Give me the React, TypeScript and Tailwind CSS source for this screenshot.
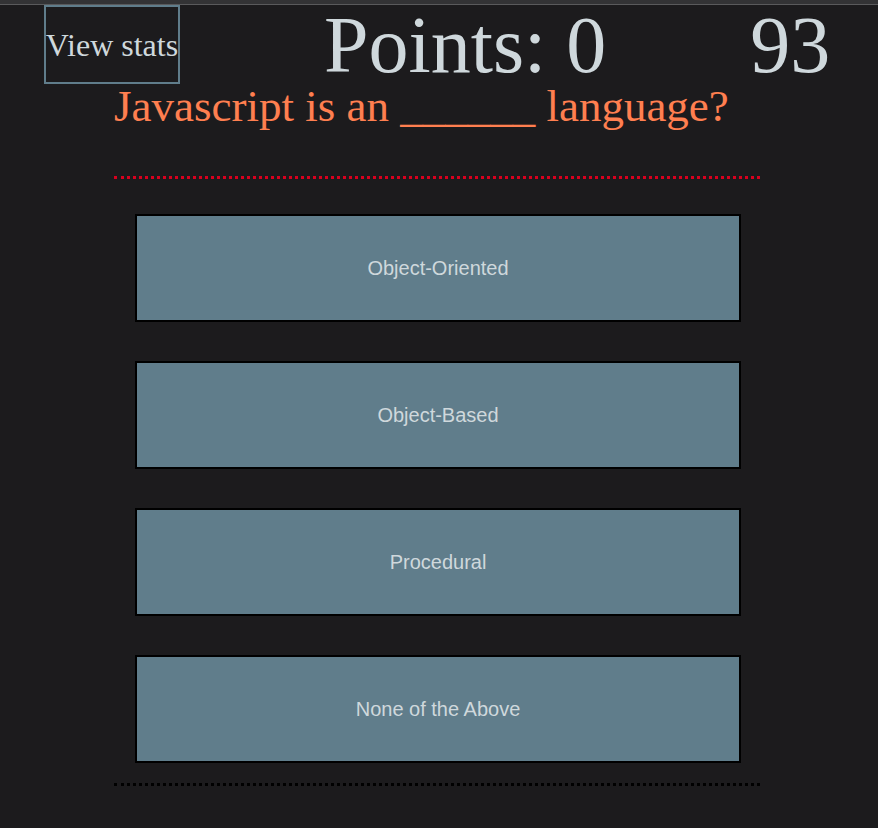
import React from 'react';

const answers = ["Object-Oriented", "Object-Based", "Procedural", "None of the Above"];

const serif = "font-['Liberation_Serif','Times_New_Roman',serif]";

const App: React.FC = () => {
  return (
    <div className="min-h-[828px] w-full bg-[#1c1b1d]">
      <div className="h-[5px] bg-[#333335] border-b border-[#5a5a5c]" />
      <div className={`flex h-[79px] items-start ${serif} text-[#cfd8dc]`}>
        <button className={`ml-[44px] flex h-[79px] w-[136px] items-center justify-center border-2 border-[#607d8b] p-0 text-[32px] leading-normal whitespace-nowrap ${serif} text-[#cfd8dc]`}>
          View stats
        </button>
        <div className="ml-[144px] text-[80px] leading-[80px] whitespace-nowrap">Points: 0</div>
        <div className="ml-[144px] text-[80px] leading-[80px]">93</div>
      </div>
      <div className="ml-[114px] w-[646px]">
        <h1 className={`${serif} text-[45px] leading-[45px] text-[#ff7f50] whitespace-nowrap`}>
          Javascript is an ______ language?
        </h1>
        <div className="mt-[47px] border-b-[3px] border-dotted border-[#d8001e]" />
        <div className="mt-[35px] flex flex-col items-start gap-[39px] pl-[21px]">
          {answers.map(a => (
            <button
              key={a}
              className="flex h-[108px] w-[606px] items-center justify-center border-2 border-black bg-[#607d8b] font-['Liberation_Sans',Arial,sans-serif] text-[20px] text-[#cfd8dc]"
            >
              {a}
            </button>
          ))}
        </div>
        <div className="mt-[20px] border-b-[3px] border-dotted border-black" />
      </div>
    </div>
  );
};

export default App;
